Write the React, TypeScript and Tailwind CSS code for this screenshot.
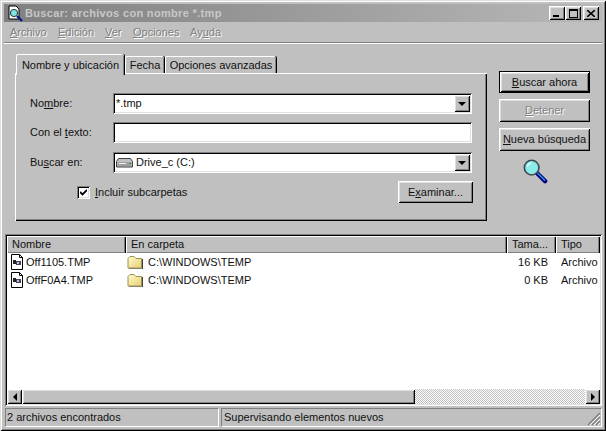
const raised = "shadow-[inset_1px_1px_0_#fff,inset_-1px_-1px_0_#000,inset_2px_2px_0_#dfdfdf,inset_-2px_-2px_0_#808080]";
const sunken = "shadow-[inset_1px_1px_0_#808080,inset_-1px_-1px_0_#fff,inset_2px_2px_0_#000,inset_-2px_-2px_0_#dfdfdf]";
const disabledText = "text-[#808080] [text-shadow:1px_1px_0_#fff]";

function Arrow({ dir }: { dir: "down" | "left" | "right" }) {
  const pts = dir === "down" ? "0,0 8,0 4,4" : dir === "left" ? "4,0 4,8 0,4" : "0,0 0,8 4,4";
  const w = dir === "down" ? 8 : 4;
  const h = dir === "down" ? 4 : 8;
  return (
    <svg width={w} height={h} viewBox={`0 0 ${w} ${h}`}>
      <polygon points={pts} fill="#000" />
    </svg>
  );
}

function Magnifier({ size = 25 }: { size?: number }) {
  return (
    <svg width={size} height={size} viewBox="0 0 26 26">
      <line x1="15" y1="15" x2="23" y2="23" stroke="#00007f" strokeWidth="4.500" strokeLinecap="round" />
      <line x1="15.500" y1="15" x2="22.500" y2="22" stroke="#2f8fd8" strokeWidth="1.600" strokeLinecap="round" />
      <circle cx="9" cy="9" r="7.600" fill="#7fe3e0" stroke="#404a50" strokeWidth="1.600" />
      <circle cx="9" cy="9" r="6" fill="#8cecea" />
      <path d="M4.500 8a5 5 0 0 1 4-4" fill="none" stroke="#e4ffff" strokeWidth="1.400" />
    </svg>
  );
}

function TitleIcon() {
  return (
    <svg width="17" height="17" viewBox="0 0 17 17">
      <path d="M2 1h7l3 3v10H2z" fill="#fff" stroke="#000" />
      <circle cx="7" cy="8" r="3.600" fill="#7fe3e0" stroke="#203040" />
      <line x1="10" y1="11" x2="15" y2="16" stroke="#00207f" strokeWidth="2.400" />
    </svg>
  );
}

function FileIcon() {
  return (
    <svg width="14" height="16" viewBox="0 0 14 16">
      <path d="M1.500 .5h8l3 3v12h-11z" fill="#fff" stroke="#000" />
      <path d="M9.500 .5v3h3" fill="none" stroke="#000" />
      <rect x="3" y="6" width="3" height="4" fill="#202020" />
      <rect x="6" y="7" width="5" height="4" fill="#404060" />
      <rect x="7" y="8" width="2" height="2" fill="#c0c0c0" />
    </svg>
  );
}

function FolderIcon() {
  return (
    <svg width="16" height="14" viewBox="0 0 16 14">
      <defs>
        <linearGradient id="fold" x1="0" y1="0" x2="1" y2="1">
          <stop offset="0" stopColor="#fffbd0" />
          <stop offset="1" stopColor="#e8d070" />
        </linearGradient>
      </defs>
      <path d="M1 3.500 3 1.500h4l2 2h5.500v9.500H1z" fill="url(#fold)" stroke="#a09050" />
      <path d="M15.500 4v10H2" fill="none" stroke="#404040" />
    </svg>
  );
}

function DriveIcon() {
  return (
    <svg width="17" height="10" viewBox="0 0 17 10">
      <path d="M2.500 .5h12l2 3v5.500H.5V3.500z" fill="#c0c0c0" stroke="#404040" />
      <rect x="1.500" y="4" width="14" height="4" fill="#a0a0a0" />
      <rect x="3" y="5" width="7" height="1" fill="#f0f0f0" />
      <rect x="13" y="5" width="2" height="1" fill="#20a020" />
    </svg>
  );
}

function CaptionButton({ children, className = "" }: { children: React.ReactNode; className?: string }) {
  return (
    <div className={`flex h-[14px] w-[16px] items-center justify-center bg-[#c0c0c0] ${raised} ${className}`}>
      {children}
    </div>
  );
}

function PushButton({
  children,
  isDefault,
  disabled,
  className = "",
}: {
  children: React.ReactNode;
  isDefault?: boolean;
  disabled?: boolean;
  className?: string;
}) {
  return (
    <div
      className={`flex items-center justify-center ${disabled ? disabledText : "text-[#111]"} ${
        isDefault ? "border border-black" : ""
      } ${raised} ${className}`}
    >
      {children}
    </div>
  );
}

function Tab({ label, active, className = "" }: { label: React.ReactNode; active?: boolean; className?: string }) {
  return (
    <div
      className={`flex items-center justify-center whitespace-nowrap rounded-t-[2px] border-t border-l border-white bg-[#c0c0c0] shadow-[inset_-1px_0_0_#808080,1px_0_0_#000] ${className} ${
        active ? "z-10 mb-[-2px] h-[21px]" : "mt-[2px] h-[17px]"
      }`}
    >
      {label}
    </div>
  );
}

function Field({ label, children }: { label: React.ReactNode; children: React.ReactNode }) {
  return (
    <div className="flex items-center">
      <div className="w-[83px]">{label}</div>
      <div className={`flex h-[21px] w-[359px] items-center bg-white pl-[3px] pr-[2px] ${sunken}`}>{children}</div>
    </div>
  );
}

function DropButton() {
  return (
    <div className={`ml-auto flex h-[17px] w-[16px] items-center justify-center bg-[#c0c0c0] ${raised}`}>
      <Arrow dir="down" />
    </div>
  );
}

function ScrollButton({ dir }: { dir: "left" | "right" }) {
  return (
    <div className={`flex h-[15px] w-[15px] shrink-0 items-center justify-center bg-[#c0c0c0] ${raised}`}>
      <Arrow dir={dir} />
    </div>
  );
}

const columns = [
  { label: "Nombre", width: "w-[119px]" },
  { label: "En carpeta", width: "w-[381px]" },
  { label: "Tama...", width: "w-[49px]" },
  { label: "Tipo", width: "w-[44px]" },
];

const files = [
  { name: "Off1105.TMP", size: "16 KB" },
  { name: "OffF0A4.TMP", size: "0 KB" },
];

export default function App() {
  return (
    <div
      className={`flex h-[431px] w-[606px] flex-col overflow-hidden bg-[#c0c0c0] p-[4px] font-['Liberation_Sans',sans-serif] text-[11px] leading-none text-[#111] shadow-[inset_1px_1px_0_#dfdfdf,inset_-1px_-1px_0_#000,inset_2px_2px_0_#fff,inset_-2px_-2px_0_#808080]`}
    >
      {/* title bar */}
      <div className="flex h-[18px] shrink-0 items-center bg-gradient-to-r from-[#808080] to-[#b8b8b8] pl-[3px] pr-[3px]">
        <TitleIcon />
        <span className="ml-[1px] text-[11px] font-bold tracking-[0.33px] text-[#c8c8c8]">
          Buscar: archivos con nombre *.tmp
        </span>
        <div className="ml-auto flex">
          <CaptionButton>
            <div className="mt-[6px] mr-[2px] h-[2px] w-[6px] bg-black" />
          </CaptionButton>
          <CaptionButton>
            <div className="h-[9px] w-[9px] border border-t-2 border-black" />
          </CaptionButton>
          <CaptionButton className="ml-[2px]">
            <svg width="8" height="7" viewBox="0 0 8 7">
              <path d="M0 0 8 7M8 0 0 7" stroke="#000" strokeWidth="1.600" />
            </svg>
          </CaptionButton>
        </div>
      </div>

      {/* menu */}
      <div className={`flex h-[20px] shrink-0 items-center pl-[6px] ${disabledText}`}>
        <span className="w-[48px]"><u>A</u>rchivo</span>
        <span className="w-[47px]"><u>E</u>dición</span>
        <span className="w-[28px]"><u>V</u>er</span>
        <span className="w-[57px]"><u>O</u>pciones</span>
        <span>Ay<u>u</u>da</span>
      </div>
      <div className="h-[2px] shrink-0 border-t border-b border-t-[#808080] border-b-white" />

      {/* search form */}
      <div className="flex h-[190px] shrink-0 pl-[11px] pt-[10px]">
        <div className="flex w-[472px] flex-col">
          <div className="flex h-[19px] pl-[1px]">
            <Tab active className="w-[108px]" label="Nombre y ubicación" />
            <Tab className="ml-[1px] w-[39px]" label="Fecha" />
            <Tab className="ml-[1px] w-[111px]" label="Opciones avanzadas" />
          </div>
          <div
            className={`flex h-[148px] flex-col pl-[15px] pr-[14px] pt-[20px] shadow-[inset_1px_1px_0_#fff,inset_-1px_-1px_0_#000,inset_-2px_-2px_0_#808080]`}
          >
            <Field label={<span>No<u>m</u>bre:</span>}>
              <span>*.tmp</span>
              <DropButton />
            </Field>
            <div className="mt-[8px]">
              <Field label={<span>Con el <u>t</u>exto:</span>}>{null}</Field>
            </div>
            <div className="mt-[9px]">
              <Field
                label={<span>Bu<u>s</u>car en:</span>}
              >
                <DriveIcon />
                <span className="ml-[3px]">Drive_c (C:)</span>
                <DropButton />
              </Field>
            </div>
            <div className="mt-[8px] flex h-[22px] items-center pl-[47px]">
              <div className={`flex h-[13px] w-[13px] items-center justify-center bg-white ${sunken}`}>
                <svg width="7" height="7" viewBox="0 0 7 7">
                  <path d="M0 3 2.500 5.500 7 1" fill="none" stroke="#000" strokeWidth="1.800" />
                </svg>
              </div>
              <span className="ml-[5px]"><u>I</u>ncluir subcarpetas</span>
              <PushButton className="ml-auto h-[22px] w-[75px]">
                <span>E<u>x</u>aminar...</span>
              </PushButton>
            </div>
          </div>
        </div>

        <div className="ml-[12px] flex w-[91px] flex-col pt-[17px]">
          <PushButton isDefault className="h-[22px]">
            <span><u>B</u>uscar ahora</span>
          </PushButton>
          <PushButton disabled className="mt-[6px] h-[23px]">
            <span><u>D</u>etener</span>
          </PushButton>
          <PushButton className="mt-[6px] h-[23px]">
            <span><u>N</u>ueva búsqueda</span>
          </PushButton>
          <div className="mt-[8px] flex pl-[24px]">
            <Magnifier />
          </div>
        </div>
      </div>

      {/* results */}
      <div className={`ml-[1px] flex h-[172px] w-[597px] shrink-0 flex-col overflow-hidden bg-white p-[2px] ${sunken}`}>
        <div className="flex h-[17px] shrink-0 bg-[#c0c0c0]">
          {columns.map((c) => (
            <div
              key={c.label}
              className={`flex items-center pl-[5px] shadow-[inset_1px_1px_0_#fff,inset_-1px_0_0_#000,inset_-2px_0_0_#808080,inset_0_-1px_0_#808080] ${c.width}`}
            >
              {c.label}
            </div>
          ))}
        </div>
        <div className="flex-1">
          {files.map((f) => (
            <div key={f.name} className="flex h-[18px] items-center">
              <div className="flex w-[119px] items-center pl-[3px]">
                <FileIcon />
                <span className="ml-[2px]">{f.name}</span>
              </div>
              <div className="flex w-[381px] items-center pl-[1px]">
                <FolderIcon />
                <span className="ml-[5px]">C:\WINDOWS\TEMP</span>
              </div>
              <div className="w-[41px] text-right">{f.size}</div>
              <div className="ml-[13px] w-[39px] overflow-hidden">Archivo</div>
            </div>
          ))}
        </div>
        <div className="flex h-[15px] shrink-0">
          <ScrollButton dir="left" />
          <div className={`w-[393px] bg-[#c0c0c0] ${raised}`} />
          <div className="flex-1 bg-[repeating-conic-gradient(#fff_0_25%,#c0c0c0_0_50%)] bg-[length:2px_2px]" />
          <ScrollButton dir="right" />
        </div>
      </div>

      {/* status bar */}
      <div className="mt-[2px] flex h-[19px] shrink-0 pl-[1px]">
        <div className="flex w-[214px] items-center border border-t-[#808080] border-l-[#808080] border-r-white border-b-white pl-[1px]">
          2 archivos encontrados
        </div>
        <div className="ml-[2px] flex flex-1 items-center border border-t-[#808080] border-l-[#808080] border-r-white border-b-white pl-[2px]">
          Supervisando elementos nuevos
          <svg className="ml-auto mt-auto" width="14" height="14" viewBox="0 0 14 14">
            <path d="M13 1 1 13M13 5 5 13M13 9 9 13" stroke="#808080" strokeWidth="1.500" />
            <path d="M13 3 3 13M13 7 7 13M13 11 11 13" stroke="#fff" />
          </svg>
        </div>
      </div>
    </div>
  );
}
